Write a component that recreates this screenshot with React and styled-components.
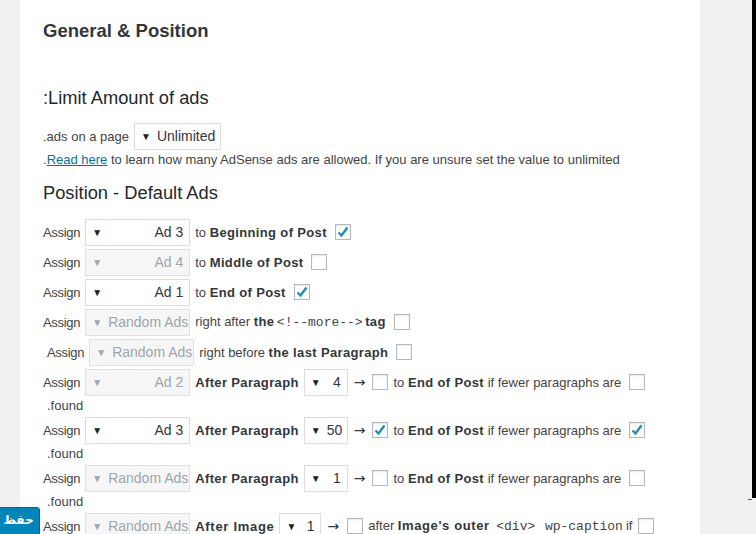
import React from 'react';
import styled, { createGlobalStyle } from 'styled-components';

const GlobalStyle = createGlobalStyle`
  html, body {
    margin: 0;
    padding: 0;
    background: #f1f1f1;
    font-family: 'Liberation Sans', Arial, sans-serif;
    font-size: 13px;
    color: #444;
    overflow: hidden;
  }
`;

const Page = styled.div`
  display: grid;
  grid-template-columns: 20px 680px 1fr;
  height: 534px;
  width: 756px;
  overflow: hidden;
  position: relative;
`;

const Panel = styled.div`
  grid-column: 2;
  background: #fff;
  padding-left: 23px;
  box-sizing: border-box;
`;

/* the frame's own scrollbar, drawn over the right edge */
const ScrollBar = styled.div`
  position: absolute;
  top: 0;
  right: 0;
  width: 4px;
  height: 498px;
  background: #000;
  z-index: 5;
  &::after {
    content: '';
    position: absolute;
    left: -4px;
    bottom: -2px;
    width: 4px;
    height: 1px;
    background: #0073aa;
  }
`;

const Title = styled.h2`
  margin: 0;
  padding-top: 19px;
  line-height: 24px;
  font-size: 18.5px;
  font-weight: 700;
  color: #32373c;
`;

const Heading = styled.h3`
  margin: ${p => p.$top}px 0 0;
  line-height: 28px;
  font-size: 18.3px;
  font-weight: 400;
  color: #23282d;
`;

const Line = styled.div`
  display: flex;
  align-items: center;
  gap: 5px;
  height: ${p => p.$h || 30}px;
  margin-top: ${p => p.$top || 0}px;
  padding-left: ${p => p.$indent || 0}px;
  white-space: nowrap;
`;

const Label = styled.span`
  letter-spacing: -0.3px;
`;

const Info = styled.div`
  line-height: 20px;
  white-space: nowrap;
`;

const Link = styled.a`
  color: #0073aa;
  text-decoration: underline;
`;

const B = styled.b`
  font-weight: 700;
  letter-spacing: ${p => p.$ls || 0.35}px;
  color: #32373c;
`;

const Found = styled.div`
  height: 18px;
  line-height: 18px;
  padding-left: 4px;
`;

const Select = styled.div`
  box-sizing: border-box;
  width: ${p => p.$w}px;
  height: 27px;
  border: 1px solid ${p => (p.$off ? '#e1e1e1' : '#ddd')};
  background: ${p => (p.$off ? '#f6f6f6' : '#fff')};
  display: flex;
  align-items: center;
  padding: 0 6px;
  color: ${p => (p.$off ? '#a0a5aa' : '#32373c')};
  font-size: 14px;
`;

const Caret = styled.span`
  font-size: 10px;
  color: ${p => (p.$off ? '#a0a5aa' : '#222')};
  margin-right: auto;
  padding-right: 6px;
`;

const Check = styled.span`
  box-sizing: border-box;
  width: 16px;
  height: 16px;
  border: 1px solid #b4b9be;
  background: #fff;
  box-shadow: inset 0 1px 2px rgba(0, 0, 0, 0.1);
  display: inline-flex;
  align-items: center;
  justify-content: center;
  margin-left: ${p => p.$ml || 0}px;
  flex-shrink: 0;
`;

const Arrow = styled.span`
  font-family: 'DejaVu Sans', sans-serif;
  font-size: 14px;
  color: #32373c;
  margin: 0 2px 0 1px;
`;

const Code = styled.code`
  font-family: 'Liberation Mono', 'Courier New', monospace;
  font-size: 13px;
  color: #444;
  margin: 0 ${p => p.$m ?? 2.5}px;
`;

const Save = styled.button`
  position: absolute;
  left: -3px;
  top: 507px;
  width: 43px;
  height: 30px;
  border: 1px solid #006799;
  border-radius: 3px;
  background: #0085ba;
  color: #fff;
  font-family: 'DejaVu Sans', sans-serif;
  font-size: 12px;
  font-weight: 700;
  padding: 0 0 4px;
`;

const Tick = () => (
  <svg width="14" height="14" viewBox="0 0 14 14">
    <path d="M2.5 7.5 L5.5 10.5 L11.5 2.5" fill="none" stroke="#1e8cbe" strokeWidth="2.4" />
  </svg>
);

const Box = ({ on, ml }) => <Check $ml={ml}>{on && <Tick />}</Check>;

const Pick = ({ value, off, w = 105, center }) => (
  <Select $off={off} $w={w}>
    <Caret $off={off}>▼</Caret>
    <span style={center ? { marginRight: 'auto' } : undefined}>{value}</span>
  </Select>
);

const Assign = ({ value, off }) => (
  <>
    <Label>Assign</Label>
    <Pick value={value} off={off} />
  </>
);

const ParaRow = ({ ad, off, num, arrowOn, endOn }) => (
  <>
    <Line>
      <Assign value={ad} off={off} />
      <B>After Paragraph</B>
      <Pick value={num} w={44} />
      <Arrow>→</Arrow>
      <Box on={arrowOn} />
      <span>to <B>End of Post</B> if fewer paragraphs are</span>
      <Box on={endOn} ml={3} />
    </Line>
    <Found>.found</Found>
  </>
);

export default function App() {
  return (
    <>
      <GlobalStyle />
      <Page>
        <Panel>
          <Title>General &amp; Position</Title>
          <Heading $top={41}>:Limit Amount of ads</Heading>
          <Line $h={28} $top={10}>
            <span>.ads on a page</span>
            <Pick value="Unlimited" w={87} center />
          </Line>
          <Info>
            .<Link href="#">Read here</Link> to learn how many AdSense ads are allowed. If you are unsure set the value to unlimited
          </Info>
          <Heading $top={9}>Position - Default Ads</Heading>

          <Line $top={10}>
            <Assign value="Ad 3" />
            <span>to <B>Beginning of Post</B></span>
            <Box on ml={3} />
          </Line>
          <Line>
            <Assign value="Ad 4" off />
            <span>to <B>Middle of Post</B></span>
            <Box ml={3} />
          </Line>
          <Line>
            <Assign value="Ad 1" />
            <span>to <B>End of Post</B></span>
            <Box on ml={3} />
          </Line>
          <Line>
            <Assign value="Random Ads" off />
            <span>right after <B>the</B><Code>&lt;!--more--&gt;</Code><B>tag</B></span>
            <Box ml={3} />
          </Line>
          <Line $indent={4}>
            <Assign value="Random Ads" off />
            <span>right before <B>the last Paragraph</B></span>
            <Box ml={3} />
          </Line>
          <ParaRow ad="Ad 2" off num="4" />
          <ParaRow ad="Ad 3" num="50" arrowOn endOn />
          <ParaRow ad="Random Ads" off num="1" />
          <Line>
            <Assign value="Random Ads" off />
            <B $ls={0.7}>After Image</B>
            <Pick value="1" w={42} />
            <Arrow>→</Arrow>
            <Box ml={1} />
            <span>after <B $ls={0.6}>Image's outer</B> <Code $m={3}>&lt;div&gt;</Code> <Code $m={3}>wp-caption</Code>if</span>
            <Box ml={1} />
          </Line>
        </Panel>
        <ScrollBar />
        <Save type="button">حفظ</Save>
      </Page>
    </>
  );
}
